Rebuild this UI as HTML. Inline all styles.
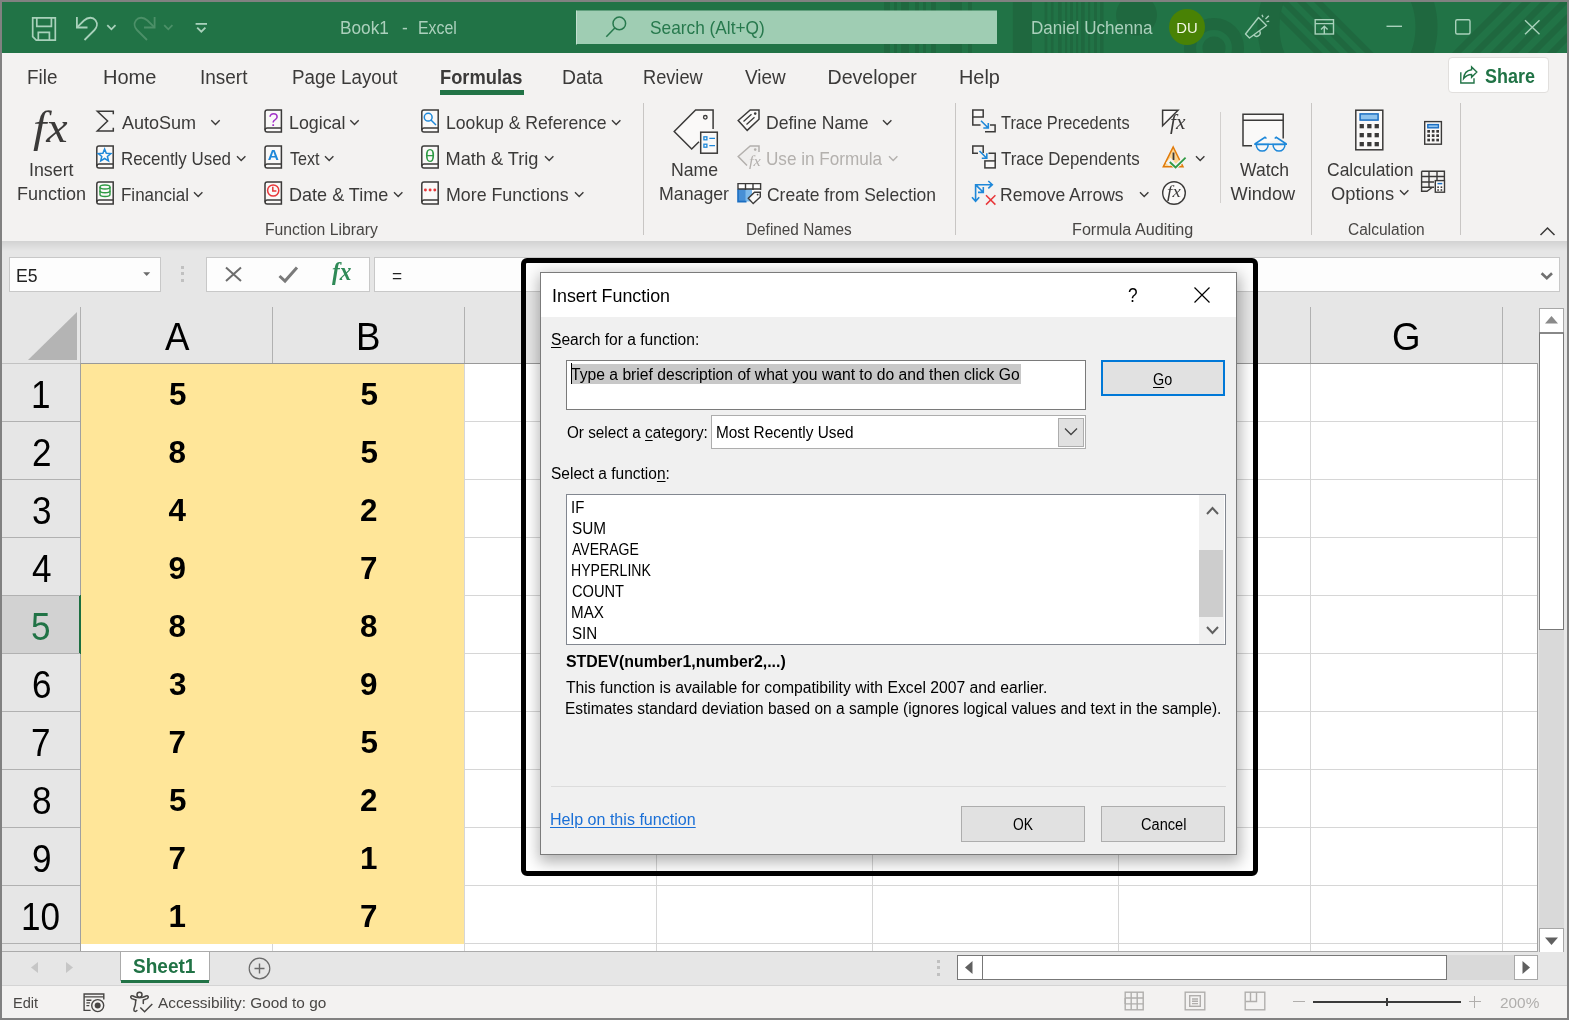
<!DOCTYPE html>
<html lang="en"><head><meta charset="utf-8"><title>Book1 - Excel</title><style>
html,body{margin:0;padding:0;background:#818181;overflow:hidden;}
#app{position:relative;width:1569px;height:1020px;overflow:hidden;background:#818181;font-family:"Liberation Sans",sans-serif;}
#app div,#app span,#app svg{position:absolute;display:block;}
#tx{left:0;top:0;width:1569px;height:1020px;will-change:transform;}
#app span{white-space:pre;line-height:1;transform-origin:0 0;}
#app span u{position:static;display:inline;text-decoration:underline;text-underline-offset:2px;text-decoration-thickness:1px;}
</style></head><body><div id="app">
<div style="left:2px;top:2px;width:1565px;height:1016px;background:#e6e6e6;"></div>
<div style="left:2px;top:2px;width:1565px;height:51px;background:#217346;overflow:hidden;"></div>
<div style="left:576.5px;top:10.5px;width:420.5px;height:33.5px;background:#9fcdb3;"></div>
<div style="left:2px;top:53px;width:1565px;height:188px;background:#f3f2f1;"></div>
<div style="left:2px;top:241px;width:1565px;height:10px;background:linear-gradient(#d2d2d2,#e6e6e6);"></div>
<div style="left:440px;top:90px;width:84px;height:5px;background:#217346;"></div>
<div style="left:643px;top:103px;width:1px;height:131.5px;background:#c8c6c4;"></div>
<div style="left:955px;top:103px;width:1px;height:131.5px;background:#c8c6c4;"></div>
<div style="left:1311px;top:103px;width:1px;height:131.5px;background:#c8c6c4;"></div>
<div style="left:1460px;top:103px;width:1px;height:131.5px;background:#c8c6c4;"></div>
<div style="left:1220px;top:112px;width:1px;height:90.5px;background:#d2d0ce;"></div>
<div style="left:1448px;top:57px;width:100.5px;height:36px;background:#fff;border:1px solid #e1dfdd;border-radius:4px;box-sizing:border-box;"></div>
<div style="left:9px;top:257px;width:152px;height:34.5px;background:#fdfdfd;border:1px solid #c8c8c8;box-sizing:border-box;"></div>
<div style="left:206px;top:257px;width:163.5px;height:34.5px;background:#fdfdfd;border:1px solid #c8c8c8;box-sizing:border-box;"></div>
<div style="left:374px;top:257px;width:1185.5px;height:34.5px;background:#fdfdfd;border:1px solid #c8c8c8;box-sizing:border-box;"></div>
<div style="left:181px;top:266.0px;width:3px;height:3px;background:#c0c0c0;"></div>
<div style="left:181px;top:272.3px;width:3px;height:3px;background:#c0c0c0;"></div>
<div style="left:181px;top:278.6px;width:3px;height:3px;background:#c0c0c0;"></div>
<div style="left:80.5px;top:363.5px;width:1456.5px;height:588px;background:#fff;"></div>
<div style="left:81px;top:364px;width:383.5px;height:579.5px;background:#ffe699;"></div>
<div style="left:2px;top:363.5px;width:78.5px;height:588px;background:#e6e6e6;"></div>
<div style="left:2px;top:596px;width:78px;height:57.5px;background:#d2d2d2;"></div>
<div style="left:80.0px;top:307px;width:1px;height:56px;background:#b1b1b1;"></div>
<div style="left:272.0px;top:307px;width:1px;height:56px;background:#b1b1b1;"></div>
<div style="left:464.0px;top:307px;width:1px;height:56px;background:#b1b1b1;"></div>
<div style="left:656.0px;top:307px;width:1px;height:56px;background:#b1b1b1;"></div>
<div style="left:872.0px;top:307px;width:1px;height:56px;background:#b1b1b1;"></div>
<div style="left:1117.5px;top:307px;width:1px;height:56px;background:#b1b1b1;"></div>
<div style="left:1310.0px;top:307px;width:1px;height:56px;background:#b1b1b1;"></div>
<div style="left:1502.0px;top:307px;width:1px;height:56px;background:#b1b1b1;"></div>
<div style="left:2px;top:363px;width:78px;height:1px;background:#c2c2c2;"></div>
<div style="left:80px;top:363px;width:1457.5px;height:1px;background:#999;"></div>
<div style="left:80px;top:363px;width:1px;height:588px;background:#a0a0a0;"></div>
<div style="left:79px;top:595px;width:2px;height:59px;background:#1c6e40;"></div>
<div style="left:464.5px;top:421.0px;width:1072.5px;height:1px;background:#d6d6d6;"></div>
<div style="left:2px;top:421.0px;width:78px;height:1px;background:#b1b1b1;"></div>
<div style="left:464.5px;top:479.0px;width:1072.5px;height:1px;background:#d6d6d6;"></div>
<div style="left:2px;top:479.0px;width:78px;height:1px;background:#b1b1b1;"></div>
<div style="left:464.5px;top:537.0px;width:1072.5px;height:1px;background:#d6d6d6;"></div>
<div style="left:2px;top:537.0px;width:78px;height:1px;background:#b1b1b1;"></div>
<div style="left:464.5px;top:595.0px;width:1072.5px;height:1px;background:#d6d6d6;"></div>
<div style="left:2px;top:595.0px;width:78px;height:1px;background:#b1b1b1;"></div>
<div style="left:464.5px;top:653.0px;width:1072.5px;height:1px;background:#d6d6d6;"></div>
<div style="left:2px;top:653.0px;width:78px;height:1px;background:#b1b1b1;"></div>
<div style="left:464.5px;top:711.0px;width:1072.5px;height:1px;background:#d6d6d6;"></div>
<div style="left:2px;top:711.0px;width:78px;height:1px;background:#b1b1b1;"></div>
<div style="left:464.5px;top:769.0px;width:1072.5px;height:1px;background:#d6d6d6;"></div>
<div style="left:2px;top:769.0px;width:78px;height:1px;background:#b1b1b1;"></div>
<div style="left:464.5px;top:827.0px;width:1072.5px;height:1px;background:#d6d6d6;"></div>
<div style="left:2px;top:827.0px;width:78px;height:1px;background:#b1b1b1;"></div>
<div style="left:464.5px;top:885.0px;width:1072.5px;height:1px;background:#d6d6d6;"></div>
<div style="left:2px;top:885.0px;width:78px;height:1px;background:#b1b1b1;"></div>
<div style="left:464.5px;top:943.0px;width:1072.5px;height:1px;background:#d6d6d6;"></div>
<div style="left:2px;top:943.0px;width:78px;height:1px;background:#b1b1b1;"></div>
<div style="left:464.0px;top:364px;width:1px;height:587px;background:#d6d6d6;"></div>
<div style="left:656.0px;top:364px;width:1px;height:587px;background:#d6d6d6;"></div>
<div style="left:872.0px;top:364px;width:1px;height:587px;background:#d6d6d6;"></div>
<div style="left:1117.5px;top:364px;width:1px;height:587px;background:#d6d6d6;"></div>
<div style="left:1310.0px;top:364px;width:1px;height:587px;background:#d6d6d6;"></div>
<div style="left:1502.0px;top:364px;width:1px;height:587px;background:#d6d6d6;"></div>
<div style="left:271.5px;top:944px;width:1px;height:7px;background:#d6d6d6;"></div>
<div style="left:1536.5px;top:363px;width:1px;height:589px;background:#a0a0a0;"></div>
<div style="left:2px;top:951px;width:1535.5px;height:1px;background:#ababab;"></div>
<div style="left:1539px;top:308px;width:25px;height:644.5px;background:#d9d9d9;"></div>
<div style="left:1539px;top:308px;width:25px;height:25px;background:#fff;border:1px solid #a8a8a8;box-sizing:border-box;"></div>
<div style="left:1539px;top:332px;width:25px;height:298px;background:#fff;border:1px solid #777;box-sizing:border-box;border-top:2px solid #888;"></div>
<div style="left:1539px;top:928px;width:25px;height:25px;background:#fff;border:1px solid #a8a8a8;box-sizing:border-box;"></div>
<div style="left:2px;top:952px;width:1565px;height:33px;background:#e6e6e6;"></div>
<div style="left:120.5px;top:952px;width:88.5px;height:28.5px;background:#fff;"></div>
<div style="left:120px;top:952px;width:1px;height:29px;background:#ababab;"></div>
<div style="left:209px;top:952px;width:1px;height:29px;background:#ababab;"></div>
<div style="left:120.5px;top:980px;width:88.5px;height:2.5px;background:#217346;"></div>
<div style="left:957px;top:955px;width:581px;height:24.5px;background:#d9d9d9;"></div>
<div style="left:957px;top:955px;width:25.5px;height:24.5px;background:#fff;border:1px solid #777;box-sizing:border-box;"></div>
<div style="left:981.5px;top:955px;width:465px;height:24.5px;background:#fff;border:1px solid #777;box-sizing:border-box;"></div>
<div style="left:1513.5px;top:955px;width:24.5px;height:24.5px;background:#fff;border:1px solid #a8a8a8;box-sizing:border-box;"></div>
<div style="left:937px;top:960.0px;width:3px;height:3px;background:#c0c0c0;"></div>
<div style="left:937px;top:966.3px;width:3px;height:3px;background:#c0c0c0;"></div>
<div style="left:937px;top:972.6px;width:3px;height:3px;background:#c0c0c0;"></div>
<div style="left:2px;top:985px;width:1565px;height:33px;background:#f3f2f1;"></div>
<div style="left:2px;top:985px;width:1565px;height:1px;background:#d4d4d4;"></div>
<div style="left:1313px;top:1000.5px;width:148px;height:2px;background:#3a3a3a;"></div>
<div style="left:1386px;top:998px;width:2px;height:8px;background:#3a3a3a;"></div>
<div style="left:1293px;top:1001px;width:11.5px;height:1px;background:#b0aeac;"></div>
<div style="left:1469px;top:1001px;width:11.5px;height:1px;background:#b0aeac;"></div>
<div style="left:1474.3px;top:995.5px;width:1px;height:12px;background:#b0aeac;"></div>
<div style="left:540px;top:272px;width:697px;height:583px;background:#f0f0f0;box-shadow:1px 5px 14px 2px rgba(0,0,0,0.31);border:1px solid #7b7b7b;box-sizing:border-box;"></div>
<div style="left:541px;top:273px;width:695px;height:44px;background:#fff;"></div>
<div style="left:521px;top:258px;width:737px;height:618px;background:transparent;border:5px solid #000;border-radius:6px;box-sizing:border-box;"></div>
<div style="left:566px;top:360px;width:519.5px;height:50px;background:#fff;border:1px solid #7a7a7a;box-sizing:border-box;"></div>
<div style="left:571px;top:363.5px;width:449.5px;height:20px;background:#c8c8c8;"></div>
<div style="left:571px;top:363px;width:1px;height:21px;background:#000;"></div>
<div style="left:1101px;top:360px;width:124px;height:35.5px;background:#e1e1e1;border:2px solid #0078d7;box-sizing:border-box;"></div>
<div style="left:711px;top:415px;width:374.5px;height:33.5px;background:#fff;border:1px solid #adadad;box-sizing:border-box;"></div>
<div style="left:1058px;top:417.5px;width:26px;height:29px;background:#e1e1e1;border:1px solid #adadad;box-sizing:border-box;"></div>
<div style="left:566px;top:494px;width:659.5px;height:150.5px;background:#fff;border:1px solid #828790;box-sizing:border-box;"></div>
<div style="left:1199px;top:495px;width:25px;height:148.5px;background:#f0f0f0;"></div>
<div style="left:1199px;top:550px;width:24px;height:67px;background:#cdcdcd;"></div>
<div style="left:551px;top:786px;width:674.5px;height:1px;background:#dcdcdc;"></div>
<div style="left:961px;top:806px;width:124px;height:36px;background:#e1e1e1;border:1px solid #adadad;box-sizing:border-box;"></div>
<div style="left:1101px;top:806px;width:124px;height:36px;background:#e1e1e1;border:1px solid #adadad;box-sizing:border-box;"></div>
<svg style="left:0;top:0" width="1569" height="56" viewBox="0 0 1569 56"><defs><clipPath id="tbclip"><rect x="884" y="2" width="683" height="51"/></clipPath><clipPath id="ringclip"><circle cx="1347.5" cy="27" r="69"/></clipPath></defs><g clip-path="url(#tbclip)"><rect x="884" y="2" width="6" height="51" fill="#1f683f"/><rect x="894" y="2" width="3" height="51" fill="#1f683f"/><rect x="901" y="2" width="8" height="51" fill="#1f683f"/><rect x="915" y="2" width="4" height="51" fill="#1f683f"/><rect x="923" y="2" width="3" height="51" fill="#1f683f"/><rect x="931" y="2" width="5" height="51" fill="#1f683f"/><rect x="950" y="2" width="12" height="51" fill="#1f683f"/><rect x="968" y="2" width="4" height="51" fill="#1f683f"/><rect x="1012.9" y="2" width="19" height="51" fill="#1f683f"/><rect x="1044.6" y="2" width="2.7" height="51" fill="#1f683f"/><rect x="1050.8" y="2" width="2.7" height="51" fill="#1f683f"/><rect x="1058" y="2" width="3.6" height="51" fill="#1f683f"/><rect x="1065" y="2" width="2.2" height="51" fill="#1f683f"/><rect x="1070" y="2" width="3" height="51" fill="#1f683f"/><rect x="1076" y="2" width="2.2" height="51" fill="#1f683f"/><rect x="1081" y="2" width="3.6" height="51" fill="#1f683f"/><rect x="1088" y="2" width="2.2" height="51" fill="#1f683f"/><rect x="1094" y="2" width="3" height="51" fill="#1f683f"/><rect x="1100" y="2" width="3.5" height="51" fill="#1f683f"/><circle cx="1136.5" cy="15" r="20.5" fill="#1f683f"/><circle cx="1214" cy="48" r="24" fill="none" stroke="#1f683f" stroke-width="12"/><circle cx="1214" cy="48" r="11.5" fill="#1f683f"/><circle cx="1347.5" cy="27" r="79" fill="none" stroke="#1f683f" stroke-width="22"/><g clip-path="url(#ringclip)"><path d="M1263 2 l8.5 0 l51 51 l-8.5 0Z" fill="#1f683f"/><path d="M1280 2 l8.5 0 l51 51 l-8.5 0Z" fill="#1f683f"/><path d="M1297 2 l8.5 0 l51 51 l-8.5 0Z" fill="#1f683f"/><path d="M1314 2 l8.5 0 l51 51 l-8.5 0Z" fill="#1f683f"/></g><path d="M1503 2 l9 0 l-51 51 l-9 0Z" fill="#1f683f"/><path d="M1522 2 l9 0 l-51 51 l-9 0Z" fill="#1f683f"/><path d="M1541 2 l9 0 l-51 51 l-9 0Z" fill="#1f683f"/><path d="M1560 2 l9 0 l-51 51 l-9 0Z" fill="#1f683f"/><path d="M1579 2 l9 0 l-51 51 l-9 0Z" fill="#1f683f"/><path d="M1598 2 l9 0 l-51 51 l-9 0Z" fill="#1f683f"/><path d="M1617 2 l9 0 l-51 51 l-9 0Z" fill="#1f683f"/></g><rect x="576.5" y="10.5" width="420.5" height="33.5" fill="#9fcdb3"/><rect x="576" y="10.5" width="1" height="34" fill="#c4dfd0"/><circle cx="1187" cy="27" r="18" fill="#498205"/></svg>
<svg style="left:0;top:0" width="1569" height="1020" viewBox="0 0 1569 1020"><g fill="none" stroke="#a9d1bb" stroke-width="1.7"><path d="M32.7 17.8H55.3V40.2H36.2L32.7 36.7Z"/><path d="M36.8 17.8V26.4H51.4V17.8"/><path d="M38.3 40.2V32.3H49.4V40.2"/></g><g fill="none" stroke="#a9d1bb" stroke-width="1.8"><path d="M76.9 17V27.5H87.5"/><path d="M77 27.4L84 20.5C88 16.8 93 17 95.5 20.2C97.8 23.4 97 27.5 94.5 30L84.5 40"/><path d="M107.3 25.2L111.4 29.3L115.5 25.2"/></g><g fill="none" stroke="#4c9068" stroke-width="1.8"><path d="M154.6 17V27.5H144"/><path d="M154.5 27.4L147.5 20.5C143.5 16.8 138.5 17 136 20.2C133.7 23.4 134.5 27.5 137 30L147 40"/><path d="M164.2 25.2L168.3 29.3L172.4 25.2"/></g><g fill="none" stroke="#a9d1bb" stroke-width="1.8"><path d="M195.6 23.9H207"/><path d="M197.2 27.6L201.3 31.7L205.4 27.6"/></g><g fill="none" stroke="#27794d" stroke-width="1.5"><circle cx="619.3" cy="23.4" r="6.3"/><path d="M614.8 27.9L606.3 36.8"/></g><g fill="none" stroke="#a9d1bb" stroke-width="1.4" stroke-linejoin="round"><path d="M1258.5 17.5L1266.5 25.5L1249.5 38L1245.5 34Z"/><path d="M1254 34.8A3.2 3.2 0 0 0 1259.5 31"/><path d="M1262 14.8L1263 17.2M1265.5 19L1268.8 15.8M1266.5 21.6L1269.2 21.2"/></g><g fill="none" stroke="#a9d1bb" stroke-width="1.4"><rect x="1315.2" y="19.7" width="18.3" height="14.3"/><path d="M1315.2 23.6H1333.5M1324.3 34V26.5M1321 29.5L1324.3 26.2L1327.6 29.5"/></g><g fill="none" stroke="#a9d1bb" stroke-width="1.4"><path d="M1386.5 26.3H1402"/><rect x="1455.7" y="19.7" width="14.3" height="14.3" rx="1.5"/><path d="M1525 20.2L1539.5 34.2M1539.5 20.2L1525 34.2"/></g><g fill="none" stroke="#217346" stroke-width="1.4" stroke-linejoin="miter"><path d="M1460.8 72.2V83H1474V78.2"/><path d="M1463.6 78.6C1464 73.4 1467 70.2 1471.6 69.7V66.9L1476.8 72L1471.6 77.2V74.5C1468 74.6 1465.6 76 1463.6 78.6Z"/></g><path d="M1540.5 235L1547.5 228L1554.5 235" fill="none" stroke="#3b3a39" stroke-width="1.5"/><path d="M211.3 120.3L215.5 124.5L219.70000000000002 120.3" fill="none" stroke="#3b3a39" stroke-width="1.4"/><path d="M237 156.3L241.2 160.5L245.4 156.3" fill="none" stroke="#3b3a39" stroke-width="1.4"/><path d="M194 192.3L198.2 196.5L202.4 192.3" fill="none" stroke="#3b3a39" stroke-width="1.4"/><path d="M350.3 120.3L354.5 124.5L358.7 120.3" fill="none" stroke="#3b3a39" stroke-width="1.4"/><path d="M325 156.3L329.2 160.5L333.4 156.3" fill="none" stroke="#3b3a39" stroke-width="1.4"/><path d="M394 192.3L398.2 196.5L402.4 192.3" fill="none" stroke="#3b3a39" stroke-width="1.4"/><path d="M612 120.3L616.2 124.5L620.4 120.3" fill="none" stroke="#3b3a39" stroke-width="1.4"/><path d="M545 156.3L549.2 160.5L553.4 156.3" fill="none" stroke="#3b3a39" stroke-width="1.4"/><path d="M575 192.3L579.2 196.5L583.4 192.3" fill="none" stroke="#3b3a39" stroke-width="1.4"/><path d="M883 120.3L887.2 124.5L891.4 120.3" fill="none" stroke="#3b3a39" stroke-width="1.4"/><path d="M1140 192.3L1144.2 196.5L1148.4 192.3" fill="none" stroke="#3b3a39" stroke-width="1.4"/><path d="M1196 156.3L1200.2 160.5L1204.4 156.3" fill="none" stroke="#3b3a39" stroke-width="1.4"/><path d="M889 156.3L893.2 160.5L897.4 156.3" fill="none" stroke="#b3b0ad" stroke-width="1.4"/><path d="M1400 190.3L1404.2 194.5L1408.4 190.3" fill="none" stroke="#3b3a39" stroke-width="1.4"/><g fill="none" stroke="#3b3a39" stroke-width="1.5"><path d="M113.2 146.10000000000002H99Q96.8 146.10000000000002 96.8 148.3V165.8Q96.8 168.10000000000002 99 168.10000000000002H113.2Z" fill="#faf9f8"/><path d="M113.2 163.9H99.2Q97 163.9 96.9 165.9"/></g><g fill="none" stroke="#3b3a39" stroke-width="1.5"><path d="M113.2 182.10000000000002H99Q96.8 182.10000000000002 96.8 184.3V201.8Q96.8 204.10000000000002 99 204.10000000000002H113.2Z" fill="#faf9f8"/><path d="M113.2 199.9H99.2Q97 199.9 96.9 201.9"/></g><g fill="none" stroke="#3b3a39" stroke-width="1.5"><path d="M281.4 110.1H267.2Q265.0 110.1 265.0 112.3V129.8Q265.0 132.1 267.2 132.1H281.4Z" fill="#faf9f8"/><path d="M281.4 127.9H267.4Q265.2 127.9 265.09999999999997 129.9"/></g><g fill="none" stroke="#3b3a39" stroke-width="1.5"><path d="M281.4 146.10000000000002H267.2Q265.0 146.10000000000002 265.0 148.3V165.8Q265.0 168.10000000000002 267.2 168.10000000000002H281.4Z" fill="#faf9f8"/><path d="M281.4 163.9H267.4Q265.2 163.9 265.09999999999997 165.9"/></g><g fill="none" stroke="#3b3a39" stroke-width="1.5"><path d="M281.4 182.10000000000002H267.2Q265.0 182.10000000000002 265.0 184.3V201.8Q265.0 204.10000000000002 267.2 204.10000000000002H281.4Z" fill="#faf9f8"/><path d="M281.4 199.9H267.4Q265.2 199.9 265.09999999999997 201.9"/></g><g fill="none" stroke="#3b3a39" stroke-width="1.5"><path d="M438.2 110.1H424Q421.8 110.1 421.8 112.3V129.8Q421.8 132.1 424 132.1H438.2Z" fill="#faf9f8"/><path d="M438.2 127.9H424.2Q422 127.9 421.9 129.9"/></g><g fill="none" stroke="#3b3a39" stroke-width="1.5"><path d="M438.2 146.10000000000002H424Q421.8 146.10000000000002 421.8 148.3V165.8Q421.8 168.10000000000002 424 168.10000000000002H438.2Z" fill="#faf9f8"/><path d="M438.2 163.9H424.2Q422 163.9 421.9 165.9"/></g><g fill="none" stroke="#3b3a39" stroke-width="1.5"><path d="M438.2 182.10000000000002H424Q421.8 182.10000000000002 421.8 184.3V201.8Q421.8 204.10000000000002 424 204.10000000000002H438.2Z" fill="#faf9f8"/><path d="M438.2 199.9H424.2Q422 199.9 421.9 201.9"/></g><path d="M113.3 114.3V111.2H97.3L107.6 121L97.3 130.9H113.3V127.8" fill="none" stroke="#3b3a39" stroke-width="1.5" stroke-linejoin="miter"/><polygon points="104.6,149.0 106.3,153.3 110.9,153.6 107.4,156.5 108.5,160.9 104.6,158.5 100.7,160.9 101.8,156.5 98.3,153.6 102.9,153.3" fill="none" stroke="#1e88d9" stroke-width="1.5" stroke-linejoin="miter"/><g fill="none" stroke="#2e9a44" stroke-width="1.4"><ellipse cx="105" cy="187" rx="5" ry="2"/><path d="M100 187V194.5A5 2 0 0 0 110 194.5V187"/><path d="M100 190.8A5 2 0 0 0 110 190.8"/></g><g fill="none" stroke="#e8373a" stroke-width="1.5"><circle cx="273.2" cy="190.5" r="5.6"/><path d="M272.8 186.8V191H276.4"/></g><g fill="none" stroke="#1e88d9" stroke-width="1.5"><circle cx="428.2" cy="117.2" r="3.9"/><path d="M431 120L436 125"/></g><circle cx="425.4" cy="190" r="1.45" fill="#e8373a"/><circle cx="430.09999999999997" cy="190" r="1.45" fill="#e8373a"/><circle cx="434.79999999999995" cy="190" r="1.45" fill="#e8373a"/><g stroke="#3b3a39" stroke-width="1.5" fill="#faf9f8"><path d="M713.1 129V109.9H695.6L674.2 131.5L691.7 149L699 141.7" stroke-linejoin="miter"/><circle cx="705.3" cy="117.3" r="1.8" fill="none" stroke-width="1.3"/><rect x="700.7" y="132.2" width="16.6" height="21" /></g><g stroke="#1e88d9" stroke-width="1.3" fill="none"><rect x="703.9" y="136.8" width="3" height="3"/><rect x="703.9" y="144.2" width="3" height="3"/><path d="M709.3 138.3H715M709.3 145.7H715"/></g><g stroke="#3b3a39" stroke-width="1.5" fill="#faf9f8"><path d="M738.2 120.5L750.2 110H759V119.3L747.2 130.4Z" stroke-linejoin="miter"/><path d="M743.5 121.5L751.5 114.2M746.5 124.6L754.5 117.3" fill="none" stroke-width="1.3"/><circle cx="755.2" cy="113.6" r="1.3" fill="#3b3a39" stroke="none"/></g><g stroke="#b3b0ad" stroke-width="1.5" fill="#efeeed"><path d="M759 152V146H750.2L738.2 156.5L747 165.5" stroke-linejoin="miter"/><circle cx="755.2" cy="149.6" r="1.3" fill="#b3b0ad" stroke="none"/></g><g><rect x="738" y="183.3" width="22.6" height="18" fill="#fff"/><rect x="738" y="189" width="14" height="12.5" fill="#7db9ea"/><rect x="738" y="189" width="7.5" height="12.5" fill="#1b6ec2" opacity="0.55"/><path d="M737.5 183.6H761M737.5 189H761M745.5 183V190M753 183V190M760.6 183V190M738 183V190" fill="none" stroke="#3b3a39" stroke-width="1.4"/><path d="M738 189.6V201.6H746.5" stroke="#1b6ec2" stroke-width="1.6" fill="none"/><path d="M748.3 198.2L754.5 192.2H760.3V197L753.2 203.6Z" fill="#faf9f8" stroke="#3b3a39" stroke-width="1.4"/><circle cx="757.6" cy="194.6" r="0.9" fill="#3b3a39"/></g><g fill="none" stroke="#3b3a39" stroke-width="1.5"><rect x="972.8" y="110" width="10.4" height="7" fill="#faf9f8"/><path d="M972.8 117V125H980.5M985 131.7H995.1V124.9H990"/></g><g fill="none" stroke="#1e88d9" stroke-width="1.6"><path d="M981 120.7L988 127.7M983.3 128H988.3V123"/></g><g fill="none" stroke="#3b3a39" stroke-width="1.5"><path d="M983.2 153V146H972.8V153.2H978"/><rect x="984.9" y="160.9" width="10.3" height="7" fill="#faf9f8"/><path d="M995.2 161V153.2H988.5"/></g><g fill="none" stroke="#1e88d9" stroke-width="1.6"><path d="M979.5 151L986.5 158M981.8 158.3H986.8V153.3"/></g><g fill="none" stroke="#1e88d9" stroke-width="1.6"><path d="M975.6 201V184.7H992M988.3 181L992.3 184.7L988.3 188.4M972 197.2L975.6 201.2L979.2 197.2M976.5 185.6L983 192M978 192.4H983.3V187"/></g><path d="M986 195.2L995.4 204.6M995.4 195.2L986 204.6" stroke="#e8373a" stroke-width="1.5" fill="none"/><path d="M1162.6 110.3H1178L1162.6 125.8Z" fill="#faf9f8" stroke="#3b3a39" stroke-width="1.5"/><path d="M1173.2 147L1183 166.8H1163.3Z" fill="#fbd694" stroke="#e07b0a" stroke-width="1.5" stroke-linejoin="miter"/><path d="M1173.5 152.5V160" stroke="#3b3a39" stroke-width="1.8"/><path d="M1167.5 164.5L1170.5 161L1175.6 167L1186.5 156.5" fill="none" stroke="#f3f2f1" stroke-width="4.5"/><path d="M1169.8 162L1175.6 167.4L1185.6 157.6" fill="none" stroke="#2e9a44" stroke-width="1.8"/><circle cx="1174" cy="193" r="11.3" fill="#faf9f8" stroke="#3b3a39" stroke-width="1.4"/><g stroke="#3b3a39" stroke-width="1.5" fill="#faf9f8"><path d="M1252 145.8H1243V114.2H1283.2V138.5" /><path d="M1243 120.2H1283.2" fill="none"/></g><g fill="#f7f7f7" stroke="#1e88d9" stroke-width="1.5"><path d="M1256.2 144.5A6 6.6 0 0 0 1268.2 144.5Z" /><path d="M1273 144.5A6 6.6 0 0 0 1285 144.5Z"/><path d="M1254.2 144.3H1287M1254.8 144L1265 137.3L1266.5 138.5M1286.4 144L1276.2 137.3L1274.7 138.5" fill="none"/></g><rect x="1355.8" y="110.2" width="27" height="39.6" fill="#faf9f8" stroke="#3b3a39" stroke-width="1.5"/><rect x="1360.1" y="113.9" width="18" height="6.2" fill="#8ec3ee" stroke="#1b6ec2" stroke-width="1.5"/><rect x="1359.6" y="124" width="4.3" height="4.3" fill="#3b3a39"/><rect x="1359.6" y="133" width="4.3" height="4.3" fill="#3b3a39"/><rect x="1359.6" y="142" width="4.3" height="4.3" fill="#3b3a39"/><rect x="1367.2" y="124" width="4.3" height="4.3" fill="#3b3a39"/><rect x="1367.2" y="133" width="4.3" height="4.3" fill="#3b3a39"/><rect x="1367.2" y="142" width="4.3" height="4.3" fill="#3b3a39"/><rect x="1374.6" y="124" width="4.3" height="4.3" fill="#3b3a39"/><rect x="1374.6" y="133" width="4.3" height="4.3" fill="#3b3a39"/><rect x="1374.6" y="142" width="4.3" height="4.3" fill="#3b3a39"/><rect x="1424.7" y="121.6" width="16.7" height="22.6" fill="#faf9f8" stroke="#3b3a39" stroke-width="1.4"/><rect x="1427.8" y="124.6" width="10.6" height="3.2" fill="#8ec3ee" stroke="#1b6ec2" stroke-width="1.4"/><rect x="1427.3" y="130" width="2.7" height="2.7" fill="#3b3a39"/><rect x="1427.3" y="134.3" width="2.7" height="2.7" fill="#3b3a39"/><rect x="1427.3" y="138.7" width="2.7" height="2.7" fill="#3b3a39"/><rect x="1431.8" y="130" width="2.7" height="2.7" fill="#3b3a39"/><rect x="1431.8" y="134.3" width="2.7" height="2.7" fill="#3b3a39"/><rect x="1431.8" y="138.7" width="2.7" height="2.7" fill="#3b3a39"/><rect x="1436.3" y="130" width="2.7" height="2.7" fill="#3b3a39"/><rect x="1436.3" y="134.3" width="2.7" height="2.7" fill="#3b3a39"/><rect x="1436.3" y="138.7" width="2.7" height="2.7" fill="#3b3a39"/><g fill="none" stroke="#3b3a39" stroke-width="1.4"><path d="M1421.6 171.3H1444.4V180M1421.6 171.3V191.2H1427L1432 187.5M1421.6 176.5H1444.4M1421.6 182H1434M1421.6 187.3H1434M1429 171.3V187.3M1437 171.3V180" /><rect x="1435.3" y="180.6" width="9.2" height="11.6" fill="#faf9f8"/></g><path d="M1437.5 183.6H1442.3" stroke="#1b6ec2" stroke-width="1.5"/><rect x="1437.3" y="186.4" width="1.6" height="1.6" fill="#3b3a39"/><rect x="1437.3" y="189.2" width="1.6" height="1.6" fill="#3b3a39"/><rect x="1440.6" y="186.4" width="1.6" height="1.6" fill="#3b3a39"/><rect x="1440.6" y="189.2" width="1.6" height="1.6" fill="#3b3a39"/><path d="M143.2 272.3H150.2L146.7 276Z" fill="#6a6a6a"/><path d="M226 267.5L241 281M241 267.5L226 281" fill="none" stroke="#6e6e6e" stroke-width="2"/><path d="M279.5 276L285 281L297 267.5" fill="none" stroke="#7a7a7a" stroke-width="3"/><path d="M1541.6 273.3L1546.8 278.3L1552 273.3" fill="none" stroke="#707070" stroke-width="2.6"/><g fill="none" stroke="#484644" stroke-width="1.4"><path d="M90.6 1010.4H84.1V994H103.8V999.6"/><path d="M84.1 996.9H103.8M86.4 1000.2H91.4M86.4 1002.9H90M86.4 1005.6H89.3"/><circle cx="97.7" cy="1005.6" r="6"/><circle cx="97.7" cy="1005.6" r="3" fill="#484644" stroke="none"/></g><g fill="none" stroke="#484644" stroke-width="1.5" stroke-linecap="round" stroke-linejoin="round"><circle cx="139.5" cy="994.7" r="2.5"/><path d="M131.8 998.6C129.6 997.4 131.2 995 133 996C136.5 998.2 142.5 998.2 146 996C147.8 995 149.4 997.4 147.2 998.6L143.3 1000V1003.4M131.8 998.6L135.8 1000"/><path d="M135.8 1000L135.4 1004C135 1007 133.8 1008.5 133.9 1010C134 1011.6 135.8 1011.8 136.9 1010.6"/><path d="M140.3 1007.5L144.6 1011.8L152.3 1004" stroke-linecap="butt" stroke-linejoin="miter"/></g><g fill="none" stroke="#b0aeac" stroke-width="1.4"><rect x="1125.2" y="992.2" width="18" height="17.6"/><path d="M1131.2 992.2V1009.8M1137.2 992.2V1009.8M1125.2 998V1004M1125.2 998H1143.2M1125.2 1003.9H1143.2"/><rect x="1185.2" y="992.2" width="19.6" height="17.6"/><rect x="1189.7" y="995.7" width="10.6" height="10.6"/><path d="M1192 999H1198M1192 1001.3H1198M1192 1003.6H1198"/><rect x="1245.2" y="992.2" width="19.6" height="17.6"/><path d="M1250.5 992.2V1001.5H1245.5M1250.5 1001.5H1256.5V992.2"/></g></svg>
<div id="tx">
<span style="left:340.09px;top:18.00px;font-size:19px;color:#abd0bc;transform:scaleX(0.9081);">Book1</span>
<span style="left:402.00px;top:18.00px;font-size:19px;color:#abd0bc;transform:scaleX(0.9167);">-</span>
<span style="left:418.16px;top:18.00px;font-size:19px;color:#abd0bc;transform:scaleX(0.8364);">Excel</span>
<span style="left:650.00px;top:18.00px;font-size:19px;color:#27794d;transform:scaleX(0.9098);">Search (Alt+Q)</span>
<span style="left:1030.60px;top:18.00px;font-size:19px;color:#abd0bc;transform:scaleX(0.8987);">Daniel Uchenna</span>
<span style="left:26.54px;top:68.00px;font-size:19.6px;color:#3b3a39;transform:scaleX(0.9617);">File</span>
<span style="left:103.48px;top:68.00px;font-size:19.6px;color:#3b3a39;transform:scaleX(1.0220);">Home</span>
<span style="left:199.53px;top:68.00px;font-size:19.6px;color:#3b3a39;transform:scaleX(0.9679);">Insert</span>
<span style="left:291.54px;top:68.00px;font-size:19.6px;color:#3b3a39;transform:scaleX(0.9581);">Page Layout</span>
<span style="left:561.51px;top:68.00px;font-size:19.6px;color:#3b3a39;transform:scaleX(0.9879);">Data</span>
<span style="left:642.57px;top:68.00px;font-size:19.6px;color:#3b3a39;transform:scaleX(0.9283);">Review</span>
<span style="left:745.00px;top:68.00px;font-size:19.6px;color:#3b3a39;transform:scaleX(0.9659);">View</span>
<span style="left:827.50px;top:68.00px;font-size:19.6px;color:#3b3a39;">Developer</span>
<span style="left:959.48px;top:68.00px;font-size:19.6px;color:#3b3a39;transform:scaleX(1.0152);">Help</span>
<span style="left:440.07px;top:68.00px;font-size:19.6px;color:#3b3a39;font-weight:700;transform:scaleX(0.9336);">Formulas</span>
<span style="left:1484.50px;top:67.00px;font-size:19.6px;color:#217346;font-weight:700;transform:scaleX(0.9164);">Share</span>
<span style="left:121.50px;top:114.00px;font-size:18.2px;color:#3b3a39;transform:scaleX(0.9910);">AutoSum</span>
<span style="left:120.57px;top:150.00px;font-size:18.2px;color:#3b3a39;transform:scaleX(0.9298);">Recently Used</span>
<span style="left:120.57px;top:186.00px;font-size:18.2px;color:#3b3a39;transform:scaleX(0.9329);">Financial</span>
<span style="left:288.52px;top:114.00px;font-size:18.2px;color:#3b3a39;transform:scaleX(0.9803);">Logical</span>
<span style="left:289.50px;top:150.00px;font-size:18.2px;color:#3b3a39;transform:scaleX(0.8859);">Text</span>
<span style="left:288.51px;top:186.00px;font-size:18.2px;color:#3b3a39;transform:scaleX(0.9921);">Date &amp; Time</span>
<span style="left:445.53px;top:114.00px;font-size:18.2px;color:#3b3a39;transform:scaleX(0.9684);">Lookup &amp; Reference</span>
<span style="left:445.50px;top:150.00px;font-size:18.2px;color:#3b3a39;">Math &amp; Trig</span>
<span style="left:445.52px;top:186.00px;font-size:18.2px;color:#3b3a39;transform:scaleX(0.9779);">More Functions</span>
<span style="left:765.53px;top:114.00px;font-size:18.2px;color:#3b3a39;transform:scaleX(0.9664);">Define Name</span>
<span style="left:765.56px;top:150.00px;font-size:18.2px;color:#b3b0ad;transform:scaleX(0.9416);">Use in Formula</span>
<span style="left:766.50px;top:186.00px;font-size:18.2px;color:#3b3a39;transform:scaleX(0.9612);">Create from Selection</span>
<span style="left:1000.50px;top:114.00px;font-size:18.2px;color:#3b3a39;transform:scaleX(0.9000);">Trace Precedents</span>
<span style="left:1000.50px;top:150.00px;font-size:18.2px;color:#3b3a39;transform:scaleX(0.9304);">Trace Dependents</span>
<span style="left:999.54px;top:186.00px;font-size:18.2px;color:#3b3a39;transform:scaleX(0.9628);">Remove Arrows</span>
<span style="left:28.52px;top:161.00px;font-size:18.2px;color:#3b3a39;transform:scaleX(0.9790);">Insert</span>
<span style="left:16.51px;top:185.00px;font-size:18.2px;color:#3b3a39;transform:scaleX(0.9905);">Function</span>
<span style="left:671.03px;top:161.00px;font-size:18.2px;color:#3b3a39;transform:scaleX(0.9705);">Name</span>
<span style="left:659.02px;top:185.00px;font-size:18.2px;color:#3b3a39;transform:scaleX(0.9756);">Manager</span>
<span style="left:1239.50px;top:161.00px;font-size:18.2px;color:#3b3a39;transform:scaleX(0.9648);">Watch</span>
<span style="left:1230.50px;top:185.00px;font-size:18.2px;color:#3b3a39;">Window</span>
<span style="left:1327.00px;top:161.00px;font-size:18.2px;color:#3b3a39;transform:scaleX(0.9622);">Calculation</span>
<span style="left:1330.50px;top:185.00px;font-size:18.2px;color:#3b3a39;transform:scaleX(1.0066);">Options</span>
<span style="left:265.49px;top:222.00px;font-size:15.6px;color:#484644;transform:scaleX(1.0089);">Function Library</span>
<span style="left:746.02px;top:222.00px;font-size:15.6px;color:#484644;transform:scaleX(0.9843);">Defined Names</span>
<span style="left:1072.46px;top:222.00px;font-size:15.6px;color:#484644;transform:scaleX(1.0370);">Formula Auditing</span>
<span style="left:1347.50px;top:222.00px;font-size:15.6px;color:#484644;transform:scaleX(0.9938);">Calculation</span>
<span style="left:16.03px;top:267.00px;font-size:18.2px;color:#222;transform:scaleX(0.9701);">E5</span>
<span style="left:391.50px;top:267.00px;font-size:18.2px;color:#222;transform:scaleX(0.9500);">=</span>
<span style="left:164.78px;top:317.00px;font-size:39px;color:#000;transform:scaleX(0.9400);">A</span>
<span style="left:355.81px;top:317.00px;font-size:39px;color:#000;transform:scaleX(0.9400);">B</span>
<span style="left:1392.37px;top:317.00px;font-size:39px;color:#000;transform:scaleX(0.9400);">G</span>
<span style="left:31.10px;top:375.00px;font-size:39px;color:#000;transform:scaleX(0.9000);">1</span>
<span style="left:31.55px;top:433.00px;font-size:39px;color:#000;transform:scaleX(0.9000);">2</span>
<span style="left:31.55px;top:491.00px;font-size:39px;color:#000;transform:scaleX(0.9000);">3</span>
<span style="left:31.55px;top:549.00px;font-size:39px;color:#000;transform:scaleX(0.9000);">4</span>
<span style="left:31.10px;top:607.00px;font-size:39px;color:#217346;transform:scaleX(0.9000);">5</span>
<span style="left:31.55px;top:665.00px;font-size:39px;color:#000;transform:scaleX(0.9000);">6</span>
<span style="left:31.10px;top:723.00px;font-size:39px;color:#000;transform:scaleX(0.9000);">7</span>
<span style="left:31.55px;top:781.00px;font-size:39px;color:#000;transform:scaleX(0.9000);">8</span>
<span style="left:31.55px;top:839.00px;font-size:39px;color:#000;transform:scaleX(0.9000);">9</span>
<span style="left:20.89px;top:897.00px;font-size:39px;color:#000;transform:scaleX(0.9000);">10</span>
<span style="left:169.00px;top:379.00px;font-size:31.4px;color:#000;font-weight:700;">5</span>
<span style="left:360.50px;top:379.00px;font-size:31.4px;color:#000;font-weight:700;">5</span>
<span style="left:168.50px;top:437.00px;font-size:31.4px;color:#000;font-weight:700;">8</span>
<span style="left:360.50px;top:437.00px;font-size:31.4px;color:#000;font-weight:700;">5</span>
<span style="left:168.50px;top:495.00px;font-size:31.4px;color:#000;font-weight:700;">4</span>
<span style="left:360.00px;top:495.00px;font-size:31.4px;color:#000;font-weight:700;">2</span>
<span style="left:168.50px;top:553.00px;font-size:31.4px;color:#000;font-weight:700;">9</span>
<span style="left:360.00px;top:553.00px;font-size:31.4px;color:#000;font-weight:700;">7</span>
<span style="left:168.50px;top:611.00px;font-size:31.4px;color:#000;font-weight:700;">8</span>
<span style="left:360.00px;top:611.00px;font-size:31.4px;color:#000;font-weight:700;">8</span>
<span style="left:169.00px;top:669.00px;font-size:31.4px;color:#000;font-weight:700;">3</span>
<span style="left:360.00px;top:669.00px;font-size:31.4px;color:#000;font-weight:700;">9</span>
<span style="left:168.50px;top:727.00px;font-size:31.4px;color:#000;font-weight:700;">7</span>
<span style="left:360.50px;top:727.00px;font-size:31.4px;color:#000;font-weight:700;">5</span>
<span style="left:169.00px;top:785.00px;font-size:31.4px;color:#000;font-weight:700;">5</span>
<span style="left:360.00px;top:785.00px;font-size:31.4px;color:#000;font-weight:700;">2</span>
<span style="left:168.50px;top:843.00px;font-size:31.4px;color:#000;font-weight:700;">7</span>
<span style="left:360.00px;top:843.00px;font-size:31.4px;color:#000;font-weight:700;">1</span>
<span style="left:168.50px;top:901.00px;font-size:31.4px;color:#000;font-weight:700;">1</span>
<span style="left:360.00px;top:901.00px;font-size:31.4px;color:#000;font-weight:700;">7</span>
<span style="left:132.50px;top:957.00px;font-size:19.6px;color:#217346;font-weight:700;transform:scaleX(0.9712);">Sheet1</span>
<span style="left:13.03px;top:995.00px;font-size:15px;color:#484644;transform:scaleX(0.9735);">Edit</span>
<span style="left:157.60px;top:995.00px;font-size:15px;color:#484644;transform:scaleX(1.0244);">Accessibility: Good to go</span>
<span style="left:1500.00px;top:995.00px;font-size:15px;color:#b0aeac;transform:scaleX(1.0256);">200%</span>
<span style="left:551.51px;top:287.00px;font-size:18px;color:#000;transform:scaleX(0.9911);">Insert Function</span>
<span style="left:1127.70px;top:284.00px;font-size:21px;color:#000;transform:scaleX(0.8200);">?</span>
<span style="left:551.00px;top:332.00px;font-size:15.6px;color:#000;"><u>S</u>earch for a function:</span>
<span style="left:571.00px;top:367.00px;font-size:15.6px;color:#000;transform:scaleX(1.0051);">Type a brief description of what you want to do and then click Go</span>
<span style="left:1153.00px;top:372.00px;font-size:15.6px;color:#000;transform:scaleX(0.9229);"><u>G</u>o</span>
<span style="left:566.50px;top:425.00px;font-size:15.6px;color:#000;transform:scaleX(0.9787);">Or select a <u>c</u>ategory:</span>
<span style="left:716.01px;top:425.00px;font-size:15.6px;color:#000;transform:scaleX(0.9865);">Most Recently Used</span>
<span style="left:551.00px;top:466.00px;font-size:15.6px;color:#000;transform:scaleX(0.9933);">Select a functio<u>n</u>:</span>
<span style="left:570.54px;top:500.00px;font-size:15.6px;color:#000;transform:scaleX(0.9568);">IF</span>
<span style="left:571.50px;top:521.00px;font-size:15.6px;color:#000;transform:scaleX(0.9803);">SUM</span>
<span style="left:571.50px;top:542.00px;font-size:15.6px;color:#000;transform:scaleX(0.9006);">AVERAGE</span>
<span style="left:570.60px;top:563.00px;font-size:15.6px;color:#000;transform:scaleX(0.9035);">HYPERLINK</span>
<span style="left:571.50px;top:584.00px;font-size:15.6px;color:#000;transform:scaleX(0.9390);">COUNT</span>
<span style="left:570.53px;top:605.00px;font-size:15.6px;color:#000;transform:scaleX(0.9733);">MAX</span>
<span style="left:571.50px;top:626.00px;font-size:15.6px;color:#000;transform:scaleX(0.9703);">SIN</span>
<span style="left:566.00px;top:654.00px;font-size:15.6px;color:#000;font-weight:700;transform:scaleX(1.0183);">STDEV(number1,number2,...)</span>
<span style="left:566.00px;top:680.00px;font-size:15.6px;color:#000;transform:scaleX(1.0079);">This function is available for compatibility with Excel 2007 and earlier.</span>
<span style="left:565.01px;top:701.00px;font-size:15.6px;color:#000;transform:scaleX(0.9924);">Estimates standard deviation based on a sample (ignores logical values and text in the sample).</span>
<span style="left:549.97px;top:812.00px;font-size:15.6px;color:#1a6fd6;transform:scaleX(1.0313);text-decoration:underline;text-underline-offset:2px;text-decoration-thickness:1px;">Help on this function</span>
<span style="left:1012.50px;top:817.00px;font-size:15.6px;color:#000;transform:scaleX(0.8863);">OK</span>
<span style="left:1140.50px;top:817.00px;font-size:15.6px;color:#000;transform:scaleX(0.9360);">Cancel</span>
<span style="left:32.60px;top:106.00px;font-size:44px;color:#3b3a39;font-family:'Liberation Serif', serif;font-style:italic;transform:scaleX(1.0923);">fx</span>
<span style="left:332.00px;top:259.00px;font-size:25px;color:#2f8a57;font-family:'Liberation Serif', serif;font-style:italic;font-weight:700;transform:scaleX(0.9348);">fx</span>
<span style="left:1169.50px;top:112.00px;font-size:21px;color:#3b3a39;font-family:'Liberation Serif', serif;font-style:italic;transform:scaleX(1.0168);">fx</span>
<span style="left:1167.30px;top:183.00px;font-size:17px;letter-spacing:0.277px;color:#3b3a39;font-family:'Liberation Serif', serif;font-style:italic;transform:scaleX(1.1000);">fx</span>
<span style="left:748.60px;top:154.00px;font-size:15px;color:#b3b0ad;font-family:'Liberation Serif', serif;font-style:italic;transform:scaleX(1.0925);">fx</span>
<span style="left:268.40px;top:111.00px;font-size:18px;color:#a333c8;">?</span>
<span style="left:267.70px;top:147.00px;font-size:15.4px;color:#1e88d9;font-weight:700;">A</span>
<span style="left:425.00px;top:147.00px;font-size:18px;color:#2e9a44;">θ</span>
<span style="left:1176.36px;top:21.00px;font-size:14.8px;color:#f4f8e6;">DU</span>
</div>
<svg style="left:28px;top:311.5px" width="49" height="48"><path d="M49 0V48H0Z" fill="#b4b4b4"/></svg>
<svg style="left:1545px;top:316px" width="13" height="8"><path d="M0 7.5L6.5 0L13 7.5Z" fill="#8a8a8a"/></svg>
<svg style="left:1545px;top:937px" width="13" height="8"><path d="M0 0.5L6.5 8L13 0.5Z" fill="#606060"/></svg>
<svg style="left:965px;top:961px" width="8" height="13"><path d="M7.5 0L0 6.5L7.5 13Z" fill="#606060"/></svg>
<svg style="left:1522px;top:961px" width="8" height="13"><path d="M0.5 0L8 6.5L0.5 13Z" fill="#606060"/></svg>
<svg style="left:30.5px;top:962px" width="7" height="11"><path d="M7 0L0 5.5L7 11Z" fill="#c6c6c6"/></svg>
<svg style="left:65.5px;top:962px" width="7" height="11"><path d="M0 0L7 5.5L0 11Z" fill="#c6c6c6"/></svg>
<svg style="left:248px;top:956.5px" width="23" height="23"><circle cx="11.5" cy="11.5" r="10.3" fill="none" stroke="#6a6a6a" stroke-width="1.2"/><path d="M6.5 11.5H16.5M11.5 6.5V16.5" stroke="#6a6a6a" stroke-width="1.4"/></svg>
<svg style="left:1064px;top:427px" width="14" height="9"><path d="M1 1.5L7 7.5L13 1.5" fill="none" stroke="#444" stroke-width="1.3"/></svg>
<svg style="left:1205.5px;top:506px" width="13" height="9"><path d="M1 8L6.5 2L12 8" fill="none" stroke="#606060" stroke-width="2"/></svg>
<svg style="left:1205.5px;top:626px" width="13" height="9"><path d="M1 1L6.5 7L12 1" fill="none" stroke="#606060" stroke-width="2"/></svg>
<svg style="left:1194px;top:287px" width="16" height="16"><path d="M0.5 0.5L15.5 15.5M15.5 0.5L0.5 15.5" stroke="#000" stroke-width="1.2"/></svg>
</div></body></html>
